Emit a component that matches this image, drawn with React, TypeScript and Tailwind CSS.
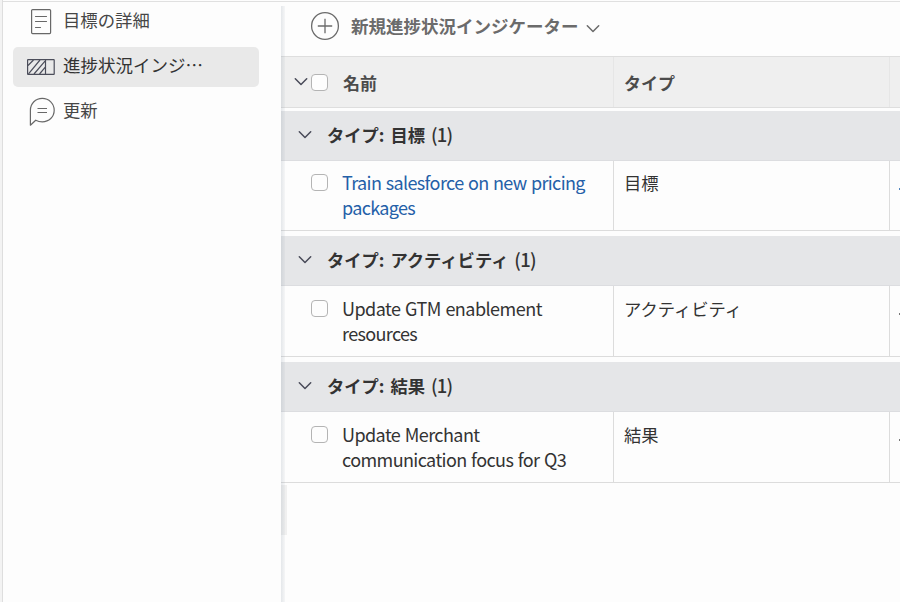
import React from "react";

type Row = {
  group: string;
  name: [string, string];
  widths: [string, string];
  type: string;
  link?: boolean;
  first?: boolean;
};

const rows: Row[] = [
  { group: "タイプ: 目標", name: ["Train salesforce on new pricing", "packages"], widths: ["tracking-[-0.63px]", "tracking-[-0.65px]"], type: "目標", link: true, first: true },
  { group: "タイプ: アクティビティ", name: ["Update GTM enablement", "resources"], widths: ["tracking-[-0.52px]", "tracking-[-0.65px]"], type: "アクティビティ" },
  { group: "タイプ: 結果", name: ["Update Merchant", "communication focus for Q3"], widths: ["tracking-[-0.57px]", "tracking-[-0.59px]"], type: "結果" },
];

function Chevron({ className = "" }: { className?: string }) {
  return (
    <svg width="14" height="10" viewBox="0 0 14 10" fill="none" strokeWidth="1.5" strokeLinecap="round" strokeLinejoin="round" className={`shrink-0 ${className}`}>
      <path d="M1.3 1.8 7 7.5l5.7-5.7" />
    </svg>
  );
}

function Checkbox() {
  return <span className="block h-[17px] w-[17px] shrink-0 rounded-[4px] border border-[#b4b4b4] bg-[#fdfdfd]" />;
}

function Sidebar() {
  return (
    <nav className="w-[278px] shrink-0 text-[17.35px] leading-[26px] text-[#464646]">
      <div className="flex h-[45px] pl-[28px]">
        <svg width="22" height="26" viewBox="0 0 22 26" fill="none" stroke="#686868" strokeWidth="1.2" className="mt-[7px] shrink-0">
          <rect x=".6" y=".6" width="19" height="24" rx="1" />
          <path d="M4.5 7.5h11M4.5 12.5h11M4.5 18.5h5" strokeLinecap="round" />
        </svg>
        <span className="ml-[10px] mt-[5px] whitespace-nowrap">目標の詳細</span>
      </div>
      <div className="ml-[10px] flex h-[40px] w-[246px] rounded-[5px] bg-[#e9e9e9] pl-[14px] text-[#333]">
        <svg width="28" height="17" viewBox="0 0 28 17" fill="none" stroke="#4b4d5a" strokeWidth="1.2" className="mt-[12px] shrink-0">
          <rect x=".6" y=".6" width="26.6" height="14.8" rx=".5" />
          <path d="M18.5 .6v14.8M1 6.5 6.5 1M1.5 14.8 13 1M7 15 18 2.2M12.5 15l5.8-6.8" />
        </svg>
        <span className="ml-[8px] mt-[5px] whitespace-nowrap text-[17.5px]">進捗状況インジ…</span>
      </div>
      <div className="flex h-[48px] pl-[26px]">
        <svg width="28" height="30" viewBox="0 0 28 30" fill="none" stroke="#686868" strokeWidth="1.2" className="mt-[10px] shrink-0">
          <path d="M1.4 28.2V13.2C1.5 6.5 6.5 1.4 13.3 1.4c6.7 0 11.9 5.2 11.9 11.8s-5.2 11.6-11.9 11.6c-2.5 0-4.8-.7-6.6-1.6z" strokeLinejoin="round" />
          <path d="M8.5 11.5h9.5M8.5 15.5h9.5" />
        </svg>
        <span className="ml-[6px] mt-[10px]">更新</span>
      </div>
    </nav>
  );
}

function Group({ row }: { row: Row }) {
  return (
    <section className="mb-[5px]">
      <div className="flex h-[50px] items-center border-b border-[#dcdde0] bg-[#e5e6e8] pl-[17px]">
        <Chevron className="-mt-[2px] stroke-[#484a58]" />
        <h2 className="-mt-[2px] ml-[15px] whitespace-nowrap text-[17.3px] font-bold leading-[26px] text-[#333] [word-spacing:2px]">
          {row.group} <span className="text-[18.5px] font-medium leading-none tracking-[-0.8px]">(1)</span>
        </h2>
      </div>
      <div className={`flex border-b border-[#dcdcdc] ${row.first ? "h-[70px]" : "h-[71px]"}`}>
        <div className={`flex w-[333px] shrink-0 border-r border-[#dcdcdc] pl-[30px] ${row.first ? "pt-[13px]" : "pt-[14px]"}`}>
          <Checkbox />
          <div className={`-mt-[4px] ml-[14px] whitespace-nowrap text-[18px] leading-[25px] [word-spacing:1px] ${row.link ? "text-[#2460a8]" : "text-[#333]"}`}>
            <div className={row.widths[0]}>{row.name[0]}</div>
            <div className={row.widths[1]}>{row.name[1]}</div>
          </div>
        </div>
        <div className={`w-[276px] shrink-0 border-r border-[#dcdcdc] pl-[10px] text-[17.3px] leading-[25px] text-[#333] ${row.first ? "pt-[9px]" : "pt-[10px]"}`}>{row.type}</div>
        <div className="flex flex-1 justify-end pt-[27px]">
          <span className={`h-[2px] w-[1px] ${row.link ? "bg-[#4e83bd]" : "bg-[#777]"}`} />
        </div>
      </div>
    </section>
  );
}

export default function App() {
  return (
    <div className="flex h-[602px] w-[900px] overflow-hidden bg-[#fdfdfd] font-['Noto_Sans_CJK_JP',sans-serif]">
      <div className="w-[3px] shrink-0 border-r border-[#dedede] bg-[#f3f3f3]" />
      <div className="mt-[1px] flex min-w-0 flex-1 border-t border-[#e0e0e0]">
        <Sidebar />
        <main className="relative min-w-0 flex-1">
          <header className="flex h-[54px] pl-[29px]">
            <svg width="30" height="30" viewBox="0 0 30 30" fill="none" stroke="#6b6b6b" strokeWidth="1.3" className="mt-[9px] shrink-0">
              <circle cx="15" cy="15" r="13.4" />
              <path d="M15 7.8v14.4M7.8 15h14.4" />
            </svg>
            <span className="ml-[11px] mt-[11px] whitespace-nowrap text-[17.5px] font-bold leading-[26px] text-[#6b6b6b]">新規進捗状況インジケーター</span>
            <Chevron className="ml-[7px] mt-[22px] stroke-[#6b6b6b]" />
          </header>
          <div className="mb-[3px] flex h-[52px] border-y border-[#dedede] bg-[#efefef] text-[17px] font-bold leading-[26px] text-[#4b4b4b]">
            <div className="flex w-[333px] shrink-0 border-r border-[#e6e6e6] pl-[13px]">
              <Chevron className="mt-[20px] stroke-[#484a58]" />
              <span className="ml-[3px] mt-[17px]"><Checkbox /></span>
              <span className="ml-[15px] mt-[13px]">名前</span>
            </div>
            <div className="w-[276px] shrink-0 border-r border-[#e6e6e6] pl-[10px] pt-[13px]">タイプ</div>
          </div>
          {rows.map((row) => <Group key={row.group} row={row} />)}
          <div className="-mt-[3px] h-[50px] w-[6px] bg-[#f0f0f0]" />
          <div className="pointer-events-none absolute bottom-0 left-0 top-[4px] w-[4px] bg-linear-to-r from-[#8d9aa738] to-[#8d9aa712]" />
        </main>
      </div>
    </div>
  );
}
